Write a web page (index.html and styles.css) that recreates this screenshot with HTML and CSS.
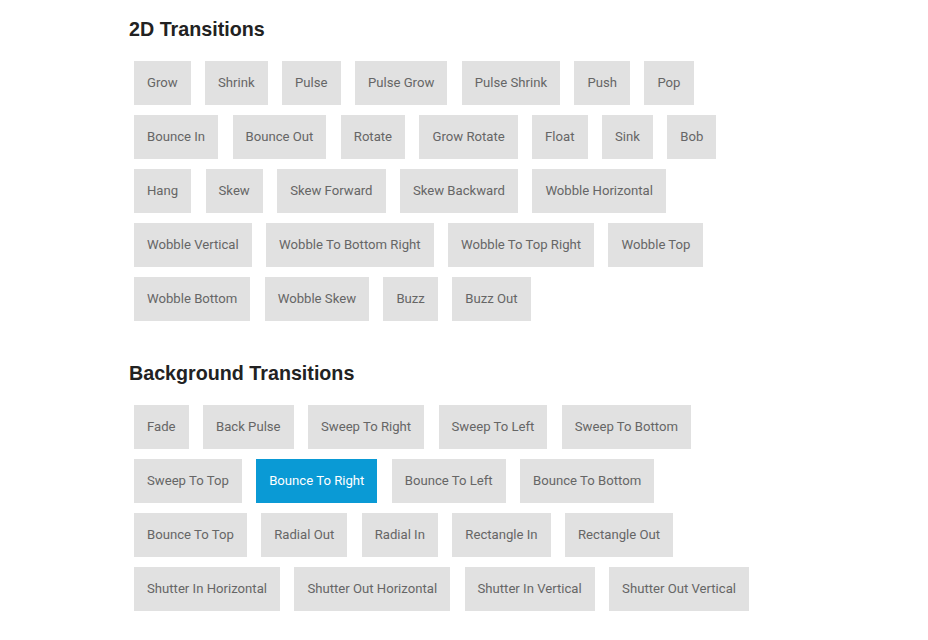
FILE: index.html
```html
<!DOCTYPE html>
<html>
<head>
<meta charset="utf-8">
<link rel="stylesheet" href="styles.css">
</head>
<body>
<div class="page">
  <section class="group">
    <h2 class="title">2D Transitions</h2>
    <div class="buttons">
      <a class="btn">Grow</a>
      <a class="btn">Shrink</a>
      <a class="btn">Pulse</a>
      <a class="btn">Pulse Grow</a>
      <a class="btn">Pulse Shrink</a>
      <a class="btn">Push</a>
      <a class="btn">Pop</a>
      <a class="btn">Bounce In</a>
      <a class="btn">Bounce Out</a>
      <a class="btn">Rotate</a>
      <a class="btn">Grow Rotate</a>
      <a class="btn">Float</a>
      <a class="btn">Sink</a>
      <a class="btn">Bob</a>
      <a class="btn">Hang</a>
      <a class="btn">Skew</a>
      <a class="btn">Skew Forward</a>
      <a class="btn">Skew Backward</a>
      <a class="btn">Wobble Horizontal</a>
      <a class="btn">Wobble Vertical</a>
      <a class="btn">Wobble To Bottom Right</a>
      <a class="btn">Wobble To Top Right</a>
      <a class="btn">Wobble Top</a>
      <a class="btn">Wobble Bottom</a>
      <a class="btn">Wobble Skew</a>
      <a class="btn">Buzz</a>
      <a class="btn">Buzz Out</a>
    </div>
  </section>
  <section class="group">
    <h2 class="title">Background Transitions</h2>
    <div class="buttons">
      <a class="btn">Fade</a>
      <a class="btn">Back Pulse</a>
      <a class="btn">Sweep To Right</a>
      <a class="btn">Sweep To Left</a>
      <a class="btn">Sweep To Bottom</a>
      <a class="btn">Sweep To Top</a>
      <a class="btn active">Bounce To Right</a>
      <a class="btn">Bounce To Left</a>
      <a class="btn">Bounce To Bottom</a>
      <a class="btn">Bounce To Top</a>
      <a class="btn">Radial Out</a>
      <a class="btn">Radial In</a>
      <a class="btn">Rectangle In</a>
      <a class="btn">Rectangle Out</a>
      <a class="btn">Shutter In Horizontal</a>
      <a class="btn">Shutter Out Horizontal</a>
      <a class="btn">Shutter In Vertical</a>
      <a class="btn">Shutter Out Vertical</a>
    </div>
  </section>
</div>
</body>
</html>
```
FILE: styles.css
```css
html, body {
  margin: 0;
  padding: 0;
  background: #ffffff;
}
.page {
  padding: 17px 0 0 129px;
  width: 640px;
}
.group + .group {
  margin-top: 40px;
}
.title {
  margin: 0 0 20px 0;
  font-family: "Liberation Sans", Arial, sans-serif;
  font-weight: bold;
  font-size: 19.7px;
  line-height: 24px;
  color: #222222;
}
.buttons {
  display: flex;
  flex-wrap: wrap;
  gap: 10px 14.4px;
  padding-left: 5px;
}
.btn {
  display: block;
  padding: 13px;
  background: #e1e1e1;
  color: #666666;
  font-family: Roboto, "Liberation Sans", sans-serif;
  font-size: 13.15px;
  line-height: 18px;
  white-space: nowrap;
}
.btn.active {
  background: #0a9ad5;
  color: #ffffff;
}
```
